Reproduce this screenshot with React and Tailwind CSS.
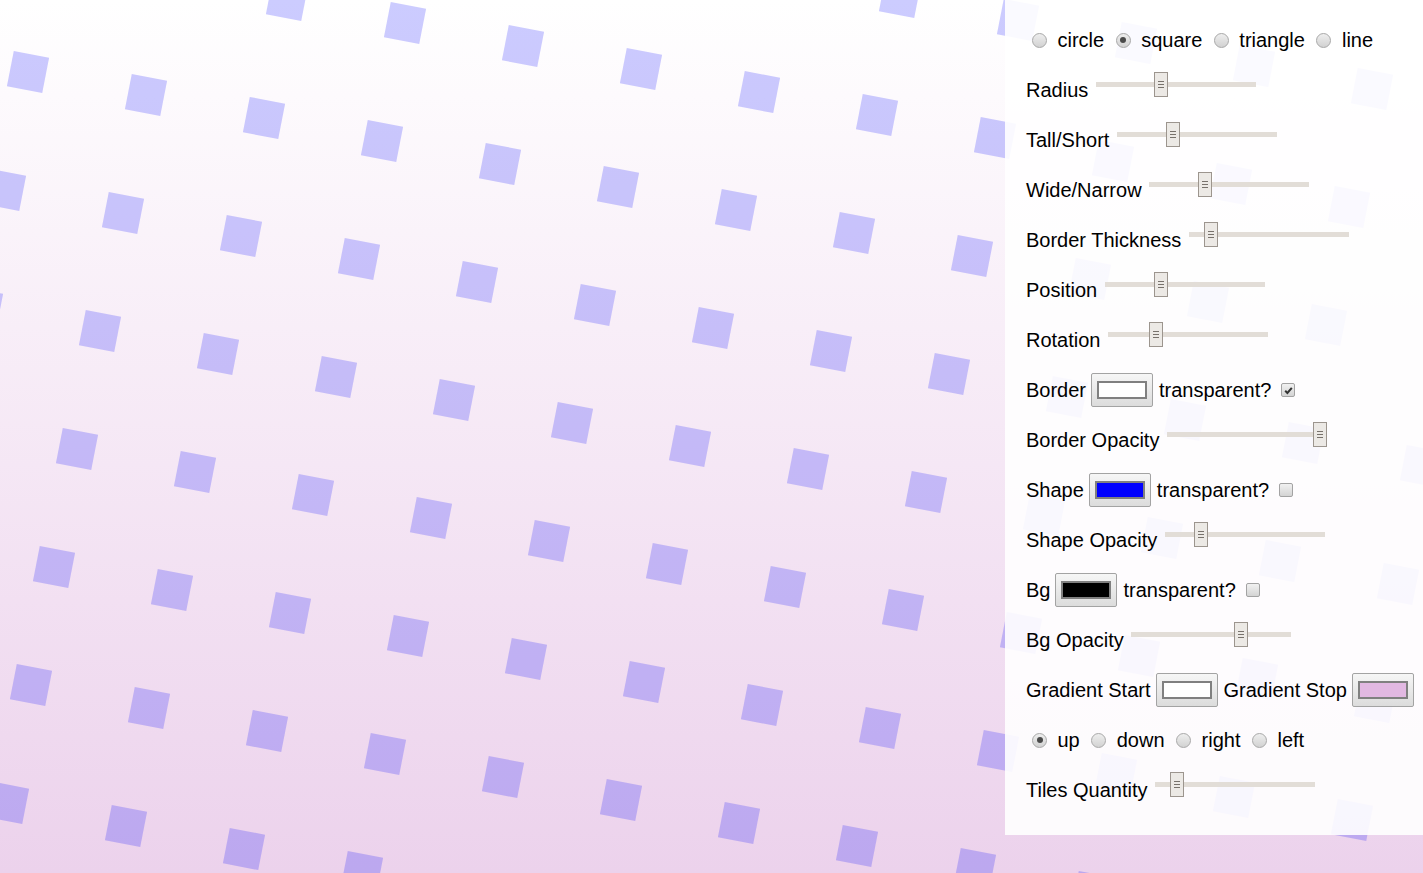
import React from 'react';

const ANGLE = 11.03;
const STEP_X = 118;
const STEP_Y = 23;
const SIDE = 36;

const tiles = [];
for (let i = -4; i < 16; i++) {
  for (let j = -3; j < 11; j++) {
    const cx = 28 + i * STEP_X - j * STEP_Y;
    const cy = 72 + i * STEP_Y + j * STEP_X;
    if (cx > -40 && cx < 1463 && cy > -40 && cy < 913) tiles.push({ cx, cy });
  }
}

const Tiles = () => (
  <svg className="absolute inset-0" width="1423" height="873" viewBox="0 0 1423 873">
    {tiles.map((t, idx) => (
      <rect
        key={idx}
        x={t.cx - SIDE / 2}
        y={t.cy - SIDE / 2}
        width={SIDE}
        height={SIDE}
        fill="#0000ff"
        fillOpacity="0.2"
        transform={`rotate(${ANGLE} ${t.cx} ${t.cy})`}
      />
    ))}
  </svg>
);

const Radio = ({ checked }) => (
  <span className="flex h-[15px] w-[15px] shrink-0 items-center justify-center rounded-full border border-[#a8a8a8] bg-linear-to-b from-[#eeeeee] to-[#d2d2d2]">
    {checked && <span className="h-[6px] w-[6px] rounded-full bg-[#4a4a4a]" />}
  </span>
);

const RadioRow = ({ options, checked }) => (
  <div className="flex h-[50px] items-center gap-[11.5px] pl-[6px]">
    {options.map((o) => (
      <label key={o} className="flex items-center">
        <Radio checked={o === checked} />
        <span className="ml-[10.5px]">{o}</span>
      </label>
    ))}
  </div>
);

const Slider = ({ at }) => (
  <div className="relative mb-[11px] ml-[7.5px] flex h-[25px] w-[160px] items-center">
    <div className="h-[5px] w-full bg-[#e2ddd7]" />
    <div
      className="absolute top-0 flex h-[25px] w-[14px] flex-col items-center justify-center gap-[2px] border border-[#9c958e] bg-[#ece9e5]"
      style={{ left: at }}
    >
      <span className="h-px w-[6px] bg-[#78726c]" />
      <span className="h-px w-[6px] bg-[#78726c]" />
      <span className="h-px w-[6px] bg-[#78726c]" />
    </div>
  </div>
);

const SliderRow = ({ label, at }) => (
  <div className="flex h-[50px] items-center">
    <span>{label}</span>
    <Slider at={at} />
  </div>
);

const ColorButton = ({ color }) => (
  <div className="flex h-[34px] w-[62px] shrink-0 items-center justify-center rounded-[2px] border border-[#a3a3a3] bg-linear-to-b from-[#f6f6f6] to-[#dcdcdc]">
    <div className="h-[18px] w-[50px] border-2 border-[#808080]" style={{ background: color }} />
  </div>
);

const Checkbox = ({ checked }) => (
  <span className="flex h-[14px] w-[14px] shrink-0 items-center justify-center rounded-[2px] border border-[#a3a3a3] bg-linear-to-b from-[#f1f1f1] to-[#d4d4d4]">
    {checked && (
      <svg width="9" height="9" viewBox="0 0 9 9">
        <path d="M1.2 4.8 L3.4 7 L7.8 1.8" fill="none" stroke="#333" strokeWidth="2" />
      </svg>
    )}
  </span>
);

const ColorRow = ({ label, color, checked }) => (
  <div className="flex h-[50px] items-center">
    <span>{label}</span>
    <div className="ml-[5px]"><ColorButton color={color} /></div>
    <span className="ml-[6px]">transparent?</span>
    <span className="ml-[10px]"><Checkbox checked={checked} /></span>
  </div>
);

export default function App() {
  return (
    <div className="relative flex h-[873px] w-full justify-end overflow-hidden bg-linear-to-b from-white to-[#ecd2ec] font-['Liberation_Sans',Arial,sans-serif] text-[20px] text-black">
      <Tiles />
      <div className="relative h-[835px] w-[418px] bg-white/90 pl-[21px] pt-[15px] leading-[23px]">
        <RadioRow options={['circle', 'square', 'triangle', 'line']} checked="square" />
        <SliderRow label="Radius" at={58} />
        <SliderRow label="Tall/Short" at={49} />
        <SliderRow label="Wide/Narrow" at={49} />
        <SliderRow label="Border Thickness" at={15} />
        <SliderRow label="Position" at={49} />
        <SliderRow label="Rotation" at={41} />
        <ColorRow label="Border" color="#ffffff" checked />
        <SliderRow label="Border Opacity" at={146} />
        <ColorRow label="Shape" color="#0000ff" />
        <SliderRow label="Shape Opacity" at={29} />
        <ColorRow label="Bg" color="#000000" />
        <SliderRow label="Bg Opacity" at={103} />
        <div className="flex h-[50px] items-center">
          <span>Gradient Start</span>
          <div className="ml-[5px]"><ColorButton color="#ffffff" /></div>
          <span className="ml-[6px]">Gradient Stop</span>
          <div className="ml-[5px]"><ColorButton color="#e2b8e2" /></div>
        </div>
        <RadioRow options={['up', 'down', 'right', 'left']} checked="up" />
        <SliderRow label="Tiles Quantity" at={15} />
      </div>
    </div>
  );
}
